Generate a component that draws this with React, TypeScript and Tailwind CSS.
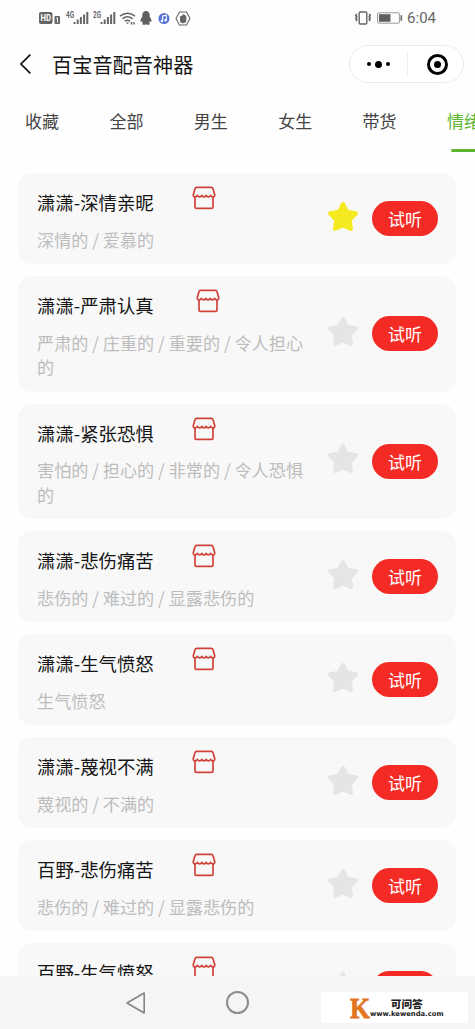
import clsx from 'clsx';

type Voice = {
  name: string;
  tags: string;
  starred?: boolean;
  wide?: boolean;
};

const tabs = ['收藏', '全部', '男生', '女生', '带货', '情绪'];

const voices: Voice[] = [
  { name: '潇潇-深情亲昵', tags: '深情的 / 爱慕的', starred: true },
  { name: '潇潇-严肃认真', tags: '严肃的 / 庄重的 / 重要的 / 令人担心的', wide: true },
  { name: '潇潇-紧张恐惧', tags: '害怕的 / 担心的 / 非常的 / 令人恐惧的' },
  { name: '潇潇-悲伤痛苦', tags: '悲伤的 / 难过的 / 显露悲伤的' },
  { name: '潇潇-生气愤怒', tags: '生气愤怒' },
  { name: '潇潇-蔑视不满', tags: '蔑视的 / 不满的' },
  { name: '百野-悲伤痛苦', tags: '悲伤的 / 难过的 / 显露悲伤的' },
  { name: '百野-生气愤怒', tags: '生气愤怒' },
];

function Signal({ label }: { label: string }) {
  return (
    <svg width="23" height="16" viewBox="0 0 23 16" fill="#666">
      <text x="0" y="7.5" fontSize="9" fontWeight="700" textLength="8" lengthAdjust="spacingAndGlyphs">{label}</text>
      <rect x="7.5" y="12" width="2" height="2" />
      <rect x="10.7" y="9.5" width="2" height="4.5" />
      <rect x="13.9" y="7" width="2" height="7" />
      <rect x="17.1" y="4.5" width="2" height="9.5" />
      <rect x="20.3" y="2" width="2" height="12" />
    </svg>
  );
}

function StatusBar() {
  return (
    <div className="flex h-9 items-center justify-between pl-[39px] pr-[39px] font-['Roboto','Noto_Sans_CJK_SC',sans-serif]">
      <div className="flex items-center">
        <svg width="22" height="14" viewBox="0 0 22 14">
          <rect x="0" y="1" width="13.5" height="12" rx="2" fill="#666" />
          <text x="1.5" y="10.3" fontSize="9" fontWeight="700" fill="#fff" textLength="10.5" lengthAdjust="spacingAndGlyphs">HD</text>
          <rect x="15.5" y="5" width="5.5" height="8" rx="1" fill="#666" />
          <path d="M17.2 7h1.3v4.5" fill="none" stroke="#fff" strokeWidth="1" />
        </svg>
        <div className="ml-[5px]"><Signal label="4G" /></div>
        <div className="ml-[4px]"><Signal label="2G" /></div>
        <svg className="ml-[3px]" width="18" height="16" viewBox="0 0 18 16" fill="none" stroke="#666" strokeWidth="1.5">
          <path d="M1 6.2Q8.5 .2 16 6.2" />
          <path d="M3.4 8.8Q8.5 4.7 13.6 8.8" />
          <path d="M5.8 11.3Q8.5 9.3 11 11.3" />
          <path d="M7 12.6h3L8.5 14.3z" fill="#666" stroke="none" />
          <path d="M12.5 12v2.5M15 12v2.5" />
        </svg>
        <svg className="ml-[3px]" width="12" height="16" viewBox="0 0 12 16" fill="#606060">
          <path d="M6 1C3.600 1 2.300 2.700 2.300 5v1.800C1.200 8.300.300 10 .400 11.400c.1.900.8.300 1.300-.4.200.8.600 1.500 1.200 2-.9.300-1.200 1.700.4 1.800 1.100.1 2.100-.1 2.700-.5.600.4 1.600.6 2.700.5 1.600-.1 1.300-1.500.4-1.800.6-.5 1-1.200 1.200-2 .5.700 1.200 1.300 1.300.4.100-1.400-.8-3.100-1.900-4.600V5C9.700 2.700 8.400 1 6 1z" />
        </svg>
        <svg className="ml-[6px]" width="12" height="13" viewBox="0 0 13 13">
          <circle cx="6.5" cy="6.5" r="6" fill="#5874d6" />
          <path d="M5 9V3.800l4-.8v5.200" fill="none" stroke="#fff" strokeWidth="1.2" />
          <circle cx="4.2" cy="9.2" r="1.3" fill="#fff" />
          <circle cx="8.2" cy="8.4" r="1.3" fill="#fff" />
        </svg>
        <svg className="ml-[5px]" width="16" height="15" viewBox="0 0 16 15">
          <path d="M4.500 1h7L15 7.500 11.500 14h-7L1 7.500z" fill="none" stroke="#666" strokeWidth="1.1" strokeLinejoin="round" />
          <path d="M5 5.500v4.300c0 1.500 1.200 2.500 3 2.500s3.300-1 3.300-2.700V5c-.4-.6-1-.5-1.300 0V3.800c-.4-.5-1-.5-1.300 0-.4-.6-1.100-.6-1.500.1v1C6.400 4.400 5.500 4.700 5 5.500z" fill="#666" />
        </svg>
      </div>
      <div className="flex items-center">
        <svg width="18" height="16" viewBox="0 0 18 16" fill="none" stroke="#666">
          <rect x="5.2" y="2" width="7.6" height="12" rx="1" strokeWidth="1.4" />
          <path d="M2.800 4l-1 1.400 1 1.400-1 1.400 1 1.400-1 1.400M15.200 4l1 1.400-1 1.400 1 1.400-1 1.400 1 1.400" strokeWidth="1.6" />
        </svg>
        <svg className="ml-[5px]" width="26" height="12" viewBox="0 0 26 12">
          <rect x=".6" y=".8" width="21.8" height="10.4" rx="1" fill="#fff" stroke="#999" strokeWidth="1" />
          <rect x="2" y="2.2" width="11.5" height="7.6" fill="#606060" />
          <rect x="23.4" y="3" width="1.8" height="6" rx=".8" fill="#777" />
        </svg>
        <span className="ml-[4px] text-[15px] leading-4 text-[#666]">6:04</span>
      </div>
    </div>
  );
}

function NavBar() {
  return (
    <div className="flex h-14 items-center pl-[19px] pr-[11px]">
      <svg width="13" height="22" viewBox="0 0 13 22" fill="none" stroke="#111" strokeWidth="1.7">
        <path d="M11.300 1.700L2 11l9.300 9.300" />
      </svg>
      <h1 className="ml-5 flex-1 pt-0.5 text-[20.2px] leading-7 text-[#151515]">百宝音配音神器</h1>
      <div className="flex h-[38px] w-[115px] items-center rounded-full border border-[#ececec] bg-white">
        <div className="flex w-[57px] items-center justify-center gap-[4px]">
          <span className="size-1 rounded-full bg-black" />
          <span className="size-[7px] rounded-full bg-black" />
          <span className="size-1 rounded-full bg-black" />
        </div>
        <div className="h-6 w-px bg-[#eee]" />
        <div className="flex flex-1 items-center justify-center pl-[3px]">
          <div className="flex size-[21px] items-center justify-center rounded-full border-[3px] border-black">
            <span className="size-[7px] rounded-full bg-black" />
          </div>
        </div>
      </div>
    </div>
  );
}

function StoreIcon({ className }: { className?: string }) {
  return (
    <svg className={className} width="24" height="24" viewBox="0 0 24 24" fill="none" stroke="#cf4238" strokeWidth="1.7" strokeLinejoin="round" strokeLinecap="round">
      <path d="M4.600 1.400h14.800c.9 0 1.400.5 1.600 1.300l1.700 5.800c.3 1.400-.5 2.300-1.700 2.300-1.100 0-1.900-.5-2.400-1.500-.6 2-3.600 2-4.400.1-.7 1.900-3.700 1.900-4.400 0-.8 1.900-3.800 1.900-4.400-.1-.5 1-1.300 1.500-2.400 1.500-1.200 0-2-.9-1.700-2.300l1.700-5.800c.2-.8.7-1.300 1.600-1.300z" />
      <path d="M3 10.800v10.100c0 1 .5 1.500 1.500 1.500h15c1 0 1.500-.5 1.500-1.500V10.800" />
    </svg>
  );
}

function StarIcon({ active }: { active?: boolean }) {
  const color = active ? '#f5ea21' : '#e5e5e5';
  return (
    <svg className="mb-[4px] shrink-0" width="32" height="32" viewBox="0 0 32 32" fill={color} stroke={color} strokeWidth="4" strokeLinejoin="round">
      <path d="M16 3l4 7.800 9 1.500-6.200 6.500 1.200 9.200L16 24.500 8 28l1.200-9.200L3 12.300l9-1.500z" />
    </svg>
  );
}

function VoiceCard({ voice }: { voice: Voice }) {
  return (
    <div className="flex shrink-0 items-center rounded-[14px] bg-[#f8f8f8] pl-[19px] pr-[18px]">
      <div className="w-[272px] pb-[12px] pt-[15px]">
        <div className="flex h-7 items-start">
          <h2 className="text-[18.4px] leading-7 text-[#151515]">{voice.name}</h2>
          <StoreIcon className={clsx('-mt-[2px]', voice.wide ? 'ml-[42px]' : 'ml-[38px]')} />
        </div>
        <p className="mt-[11.5px] text-[17.15px] leading-[24.5px] text-[#bdbdbd]">{voice.tags}</p>
      </div>
      <div className="ml-auto flex items-center gap-[13px]">
        <StarIcon active={voice.starred} />
        <button className="h-[35px] w-[66px] rounded-full bg-[#f42b25] text-[17px] leading-[35px] text-white">试听</button>
      </div>
    </div>
  );
}

function Watermark() {
  return (
    <div className="absolute right-[7px] top-4 flex h-[31px] w-[147px] items-center bg-white pl-[29px]">
      <svg className="shrink-0" width="20" height="22" viewBox="0 0 20 22" fill="#e2761f" stroke="#e2761f" strokeWidth=".8">
        <text x="0" y="21" fontFamily="Liberation Serif, serif" fontSize="30" fontWeight="700" textLength="20" lengthAdjust="spacingAndGlyphs">K</text>
      </svg>
      <div className="flex flex-col items-center text-[#222]">
        <span className="h-[13px] text-[10.7px] font-black leading-[13px]">可问答</span>
        <span className="h-[9px] font-['DejaVu_Sans','Liberation_Sans',sans-serif] text-[6.8px] font-bold leading-[9px]">www.kewenda.com</span>
      </div>
    </div>
  );
}

export default function App() {
  return (
    <div className="flex h-[1029px] w-[475px] flex-col overflow-hidden bg-[#fefefe] font-['Noto_Sans_CJK_SC',sans-serif]">
      <StatusBar />
      <NavBar />
      <div className="flex h-[60px] shrink-0 gap-[50.4px] overflow-hidden pl-[25px]">
        {tabs.map((tab, i) => {
          const active = i === tabs.length - 1;
          return (
            <div key={tab} className={clsx('flex w-[34px] shrink-0 flex-col items-center text-[17px] leading-6', active ? 'text-[#5bb531]' : 'text-[#444]')}>
              <span className="mt-[17px]">{tab}</span>
              {active && <span className="mt-4 h-[3px] w-[25px] rounded-full bg-[#5bb531]" />}
            </div>
          );
        })}
      </div>
      <div className="flex min-h-0 flex-1 flex-col gap-3 overflow-hidden pl-[18px] pr-[19px] pt-[21px]">
        {voices.map((voice) => (
          <VoiceCard key={voice.name} voice={voice} />
        ))}
      </div>
      {/* system navigation */}
      <div className="relative h-[53px] shrink-0 bg-[#f5f5f5]">
        <div className="flex h-full items-center pl-[125px]">
          <svg width="22" height="24" viewBox="0 0 22 24" fill="none" stroke="#858585" strokeWidth="1.6" strokeLinejoin="round">
            <path d="M19.200 2v20L2 12z" />
          </svg>
          <div className="ml-[79px] size-[23px] rounded-full border-2 border-[#8c8c8c]" />
        </div>
        <Watermark />
      </div>
    </div>
  );
}
